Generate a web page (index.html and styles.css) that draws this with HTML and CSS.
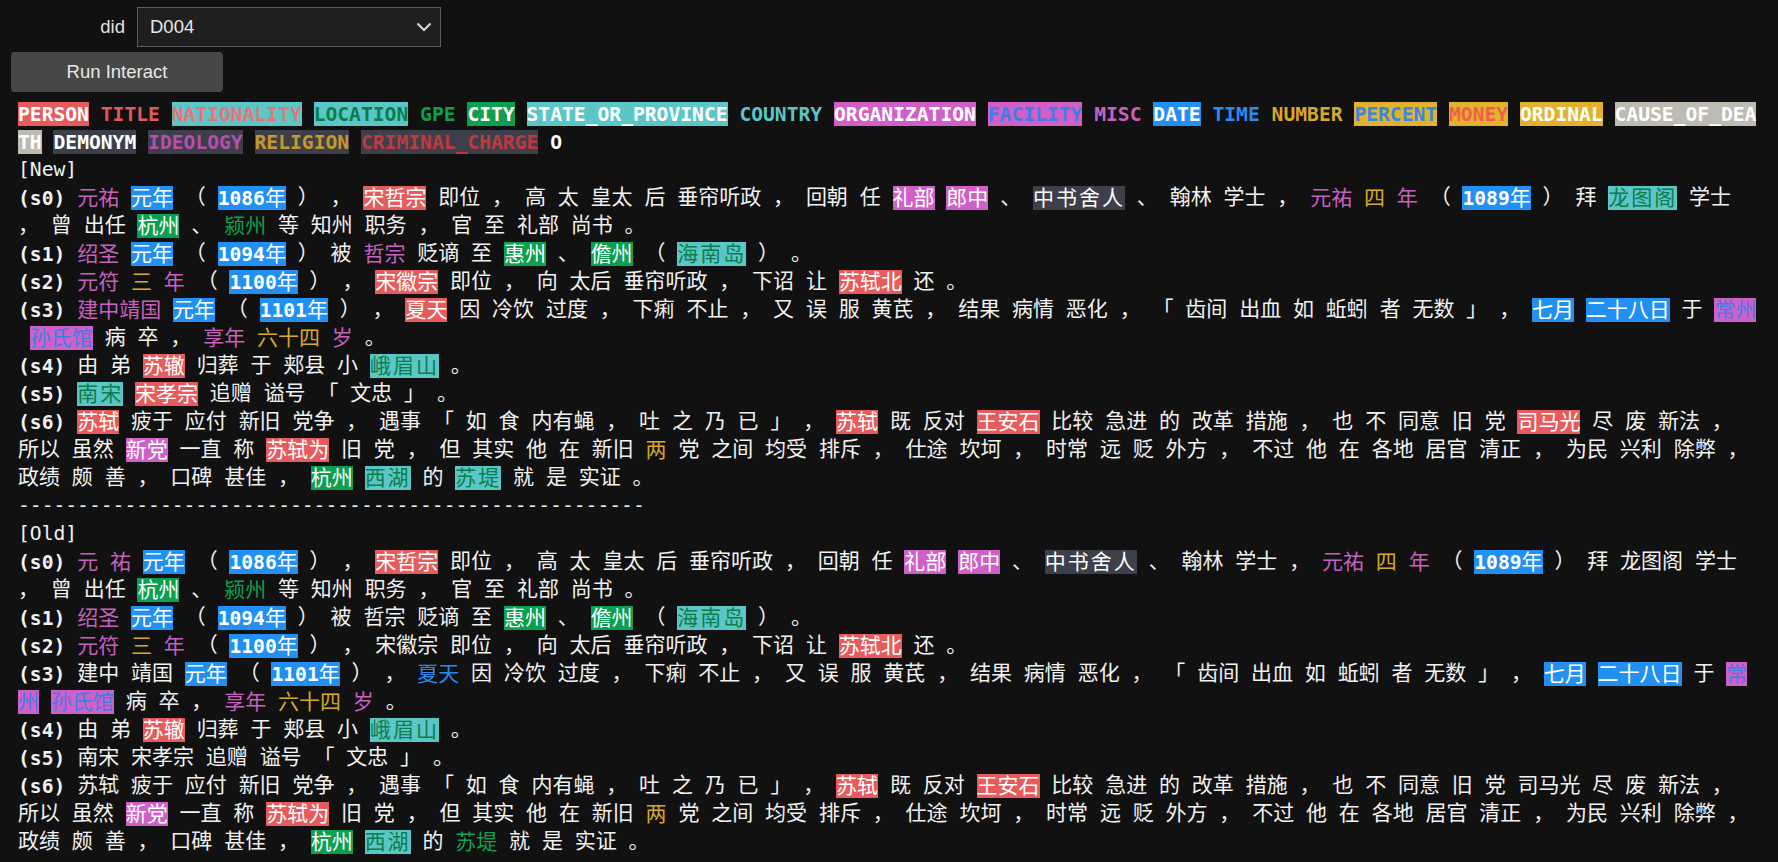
FILE: index.html
```html
<!DOCTYPE html>
<html lang="zh">
<head>
<meta charset="utf-8">
<title>Interact</title>
<link rel="stylesheet" href="styles.css">
</head>
<body>
<div class="top">
  <div class="row">
    <label class="lbl">did</label>
    <div class="sel"><span>D004</span><svg class="chev" width="16" height="10" viewBox="0 0 16 10"><path d="M1.5 1.5 L8 8 L14.5 1.5" fill="none" stroke="#d8d8d8" stroke-width="2"/></svg></div>
  </div>
  <button class="btn">Run Interact</button>
</div>
<div class="out">
<div class="ln lg"><span class="PERSON">PERSON</span> <span class="TITLE">TITLE</span> <span class="NATIONALITY">NATIONALITY</span> <span class="LOCATION">LOCATION</span> <span class="GPE">GPE</span> <span class="CITY">CITY</span> <span class="STATE_OR_PROVINCE">STATE_OR_PROVINCE</span> <span class="COUNTRY">COUNTRY</span> <span class="ORGANIZATION">ORGANIZATION</span> <span class="FACILITY">FACILITY</span> <span class="MISC">MISC</span> <span class="DATE">DATE</span> <span class="TIME">TIME</span> <span class="NUMBER">NUMBER</span> <span class="PERCENT">PERCENT</span> <span class="MONEY">MONEY</span> <span class="ORDINAL">ORDINAL</span> <span class="CAUSE_OF_DEATH">CAUSE_OF_DEATH</span> <span class="DEMONYM">DEMONYM</span> <span class="IDEOLOGY">IDEOLOGY</span> <span class="RELIGION">RELIGION</span> <span class="CRIMINAL_CHARGE">CRIMINAL_CHARGE</span> <span class="O">O</span></div>
<div class="ln">[New]</div>
<div class="ln"><span class="sid">(s0)</span> <span class="e MISC">元祐</span> <span class="e DATE">元年</span> （ <span class="e DATE">1086年</span> ） ， <span class="e PERSON">宋哲宗</span> 即位 ， 高 太 皇太 后 垂帘听政 ， 回朝 任 <span class="e ORGANIZATION">礼部</span> <span class="e ORGANIZATION">郎中</span> 、 <span class="e DEMONYM">中书舍人</span> 、 翰林 学士 ， <span class="e MISC">元祐</span> <span class="e NUMBER">四</span> <span class="e MISC">年</span> （ <span class="e DATE">1089年</span> ） 拜 <span class="e LOCATION">龙图阁</span> 学士 ， 曾 出任 <span class="e CITY">杭州</span> 、 <span class="e GPE">颍州</span> 等 知州 职务 ， 官 至 礼部 尚书 。</div>
<div class="ln"><span class="sid">(s1)</span> <span class="e MISC">绍圣</span> <span class="e DATE">元年</span> （ <span class="e DATE">1094年</span> ） 被 <span class="e MISC">哲宗</span> 贬谪 至 <span class="e CITY">惠州</span> 、 <span class="e CITY">儋州</span> （ <span class="e LOCATION">海南岛</span> ） 。</div>
<div class="ln"><span class="sid">(s2)</span> <span class="e MISC">元符</span> <span class="e NUMBER">三</span> <span class="e MISC">年</span> （ <span class="e DATE">1100年</span> ） ， <span class="e PERSON">宋徽宗</span> 即位 ， 向 太后 垂帘听政 ， 下诏 让 <span class="e PERSON">苏轼北</span> 还 。</div>
<div class="ln"><span class="sid">(s3)</span> <span class="e MISC">建中靖国</span> <span class="e DATE">元年</span> （ <span class="e DATE">1101年</span> ） ， <span class="e PERSON">夏天</span> 因 冷饮 过度 ， 下痢 不止 ， 又 误 服 黄芪 ， 结果 病情 恶化 ， 「 齿间 出血 如 蚯蚓 者 无数 」 ， <span class="e DATE">七月</span> <span class="e DATE">二十八日</span> 于 <span class="e FACILITY">常州</span><wbr>&nbsp;<span class="e FACILITY">孙氏馆</span> 病 卒 ， <span class="e MISC">享年</span> <span class="e NUMBER">六十四</span> <span class="e MISC">岁</span> 。</div>
<div class="ln"><span class="sid">(s4)</span> 由 弟 <span class="e PERSON">苏辙</span> 归葬 于 郏县 小 <span class="e LOCATION">峨眉山</span> 。</div>
<div class="ln"><span class="sid">(s5)</span> <span class="e LOCATION">南宋</span> <span class="e PERSON">宋孝宗</span> 追赠 谥号 「 文忠 」 。</div>
<div class="ln"><span class="sid">(s6)</span> <span class="e PERSON">苏轼</span> 疲于 应付 新旧 党争 ， 遇事 「 如 食 内有蝇 ， 吐 之 乃 已 」 ， <span class="e PERSON">苏轼</span> 既 反对 <span class="e PERSON">王安石</span> 比较 急进 的 改革 措施 ， 也 不 同意 旧 党 <span class="e PERSON">司马光</span> 尽 废 新法 ， 所以 虽然 <span class="e ORGANIZATION">新党</span> 一直 称 <span class="e PERSON">苏轼为</span> 旧 党 ， 但 其实 他 在 新旧 <span class="e NUMBER">两</span> 党 之间 均受 排斥 ， 仕途 坎坷 ， 时常 远 贬 外方 ， 不过 他 在 各地 居官 清正 ， 为民 兴利 除弊 ， 政绩 颇 善 ， 口碑 甚佳 ， <span class="e CITY">杭州</span> <span class="e LOCATION">西湖</span> 的 <span class="e LOCATION">苏堤</span> 就 是 实证 。</div>
<div class="ln">-----------------------------------------------------</div>
<div class="ln">[Old]</div>
<div class="ln"><span class="sid">(s0)</span> <span class="e MISC">元</span> <span class="e MISC">祐</span> <span class="e DATE">元年</span> （ <span class="e DATE">1086年</span> ） ， <span class="e PERSON">宋哲宗</span> 即位 ， 高 太 皇太 后 垂帘听政 ， 回朝 任 <span class="e ORGANIZATION">礼部</span> <span class="e ORGANIZATION">郎中</span> 、 <span class="e DEMONYM">中书舍人</span> 、 翰林 学士 ， <span class="e MISC">元祐</span> <span class="e NUMBER">四</span> <span class="e MISC">年</span> （ <span class="e DATE">1089年</span> ） 拜 龙图阁 学士 ， 曾 出任 <span class="e CITY">杭州</span> 、 <span class="e GPE">颍州</span> 等 知州 职务 ， 官 至 礼部 尚书 。</div>
<div class="ln"><span class="sid">(s1)</span> <span class="e MISC">绍圣</span> <span class="e DATE">元年</span> （ <span class="e DATE">1094年</span> ） 被 哲宗 贬谪 至 <span class="e CITY">惠州</span> 、 <span class="e CITY">儋州</span> （ <span class="e LOCATION">海南岛</span> ） 。</div>
<div class="ln"><span class="sid">(s2)</span> <span class="e MISC">元符</span> <span class="e NUMBER">三</span> <span class="e MISC">年</span> （ <span class="e DATE">1100年</span> ） ， 宋徽宗 即位 ， 向 太后 垂帘听政 ， 下诏 让 <span class="e PERSON">苏轼北</span> 还 。</div>
<div class="ln"><span class="sid">(s3)</span> 建中 靖国 <span class="e DATE">元年</span> （ <span class="e DATE">1101年</span> ） ， <span class="e TIME">夏天</span> 因 冷饮 过度 ， 下痢 不止 ， 又 误 服 黄芪 ， 结果 病情 恶化 ， 「 齿间 出血 如 蚯蚓 者 无数 」 ， <span class="e DATE">七月</span> <span class="e DATE">二十八日</span> 于 <span class="e FACILITY">常州</span> <span class="e FACILITY">孙氏馆</span> 病 卒 ， <span class="e MISC">享年</span> <span class="e NUMBER">六十四</span> <span class="e MISC">岁</span> 。</div>
<div class="ln"><span class="sid">(s4)</span> 由 弟 <span class="e PERSON">苏辙</span> 归葬 于 郏县 小 <span class="e LOCATION">峨眉山</span> 。</div>
<div class="ln"><span class="sid">(s5)</span> 南宋 宋孝宗 追赠 谥号 「 文忠 」 。</div>
<div class="ln"><span class="sid">(s6)</span> 苏轼 疲于 应付 新旧 党争 ， 遇事 「 如 食 内有蝇 ， 吐 之 乃 已 」 ， <span class="e PERSON">苏轼</span> 既 反对 <span class="e PERSON">王安石</span> 比较 急进 的 改革 措施 ， 也 不 同意 旧 党 司马光 尽 废 新法 ， 所以 虽然 <span class="e ORGANIZATION">新党</span> 一直 称 <span class="e PERSON">苏轼为</span> 旧 党 ， 但 其实 他 在 新旧 <span class="e NUMBER">两</span> 党 之间 均受 排斥 ， 仕途 坎坷 ， 时常 远 贬 外方 ， 不过 他 在 各地 居官 清正 ， 为民 兴利 除弊 ， 政绩 颇 善 ， 口碑 甚佳 ， <span class="e CITY">杭州</span> <span class="e LOCATION">西湖</span> 的 <span class="e GPE">苏堤</span> 就 是 实证 。</div>
</div>
<script src="script.js"></script>
</body>
</html>
```

FILE: styles.css
```css
html, body {
  margin: 0;
  background: #111111;
}
body {
  color: #f0f0f0;
  font-family: "Liberation Sans", Arial, sans-serif;
}
.top {
  padding-top: 7px;
}
.row {
  display: flex;
  align-items: center;
  gap: 12px;
}
.lbl {
  width: 125px;
  text-align: right;
  font-size: 18.5px;
  color: #e2e2e2;
}
.sel {
  box-sizing: border-box;
  width: 304px;
  height: 40px;
  border: 1px solid #5c5c5c;
  background: #1f1f1f;
  display: flex;
  align-items: center;
  justify-content: space-between;
  padding: 0 8px 0 12px;
  font-size: 18.5px;
  color: #e8e8e8;
}
.chev {
  display: block;
}
.btn {
  display: block;
  margin: 5px 0 0 11px;
  width: 212px;
  height: 40px;
  border: none;
  border-radius: 4px;
  background: #474747;
  color: #e8e8e8;
  font-family: "Liberation Sans", Arial, sans-serif;
  font-size: 18.5px;
  padding: 0;
}
.out {
  margin: 8px 0 0 18px;
  width: 1741px;
  font-family: "DejaVu Sans Mono", monospace;
  font-size: 19.65px;
  line-height: 28px;
  color: #f2f2f2;
}
.ln {
  white-space: pre-wrap;
  word-break: break-all;
}
.lg span,
.e,
.sid {
  font-weight: 700;
  padding: 0.5px 0;
}
.cjk {
  font-family: "Noto Sans CJK SC", sans-serif;
  font-size: 21px;
  font-weight: 400;
  line-height: 1;
}
.LOCATION .cjk,
.DEMONYM .cjk {
  letter-spacing: 2px;
}

.PERSON { background: #e65c5c; color: #ffffff; }
.TITLE { color: #e0585a; }
.NATIONALITY { background: #5cc6c6; color: #e8737a; }
.LOCATION { background: #5cc6c6; color: #0b7d4e; }
.GPE { color: #0ca050; }
.CITY { background: #0b9f4f; color: #ffffff; }
.STATE_OR_PROVINCE { background: #5cc6c6; color: #ffffff; }
.COUNTRY { color: #5cc6c6; }
.ORGANIZATION { background: #d060c8; color: #ffffff; }
.FACILITY { background: #d060c8; color: #3d7fe6; }
.MISC { color: #c860c0; }
.DATE { background: #2290f2; color: #ffffff; }
.TIME { color: #2a8af0; }
.NUMBER { color: #d8a828; }
.PERCENT { background: #e2b22e; color: #3a86e6; }
.MONEY { background: #e2b22e; color: #f06048; }
.ORDINAL { background: #e2b22e; color: #ffffff; }
.CAUSE_OF_DEATH { background: #bebbb1; color: #ffffff; }
.DEMONYM { background: #3d404a; color: #ffffff; }
.IDEOLOGY { background: #3d404a; color: #b64fb0; }
.RELIGION { background: #3d404a; color: #c8962a; }
.CRIMINAL_CHARGE { background: #3d404a; color: #c0393e; }
.O { color: #ffffff; }
```

FILE: script.js
```js
(function () {
  var re = /([\u2E80-\u9FFF\u3000-\u303F\uFF00-\uFFEF]+)/;
  document.querySelectorAll('.ln').forEach(function (ln) {
    var walker = document.createTreeWalker(ln, NodeFilter.SHOW_TEXT);
    var nodes = [];
    while (walker.nextNode()) nodes.push(walker.currentNode);
    nodes.forEach(function (n) {
      var parts = n.nodeValue.split(re);
      if (parts.length < 2) return;
      var frag = document.createDocumentFragment();
      parts.forEach(function (p, i) {
        if (!p) return;
        if (i % 2) {
          var s = document.createElement('span');
          s.className = 'cjk';
          s.textContent = p;
          frag.appendChild(s);
        } else {
          frag.appendChild(document.createTextNode(p));
        }
      });
      n.parentNode.replaceChild(frag, n);
    });
  });
})();
```
